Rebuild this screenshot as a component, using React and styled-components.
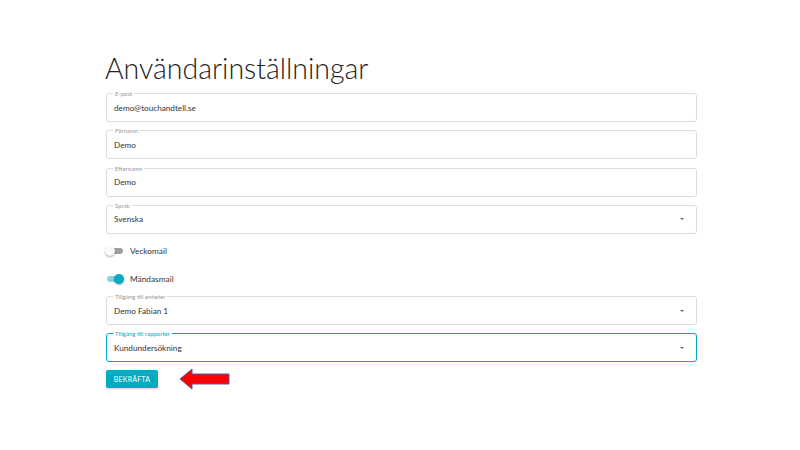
import React from "react";
import styled, { createGlobalStyle } from "styled-components";

const GlobalStyle = createGlobalStyle`
  body {
    margin: 0;
    background: #ffffff;
    font-family: Lato, "Liberation Sans", sans-serif;
    color: #333;
  }
`;

const accent = "#00acc1";

const Page = styled.div`
  width: 591px;
  margin-left: 106px;
  padding-top: 51px;
`;

const Title = styled.h1`
  margin: 0 0 5px -1px;
  font-weight: 300;
  font-size: 28.5px;
  line-height: 34px;
  color: #222;
`;

const Field = styled.fieldset`
  box-sizing: border-box;
  margin: 0 0 5.3px;
  padding: 0 7px;
  height: 32px;
  border: ${p => (p.$focused ? `1.5px solid ${accent}` : "1px solid #dcdcdc")};
  border-radius: 3px;
  display: flex;
  align-items: center;
  justify-content: space-between;
`;

const Legend = styled.legend`
  font-size: 6px;
  line-height: 7px;
  padding: 0 2px;
  margin-left: -1px;
  color: ${p => (p.$focused ? accent : "#999")};
`;

const Value = styled.span`
  font-size: 8.2px;
  font-weight: 400;
  color: #333;
  margin-top: -3px;
`;

const Caret = styled.span`
  width: 0;
  height: 0;
  border-left: 2.5px solid transparent;
  border-right: 2.5px solid transparent;
  border-top: 2.5px solid #666;
  margin-right: 5px;
  margin-top: -3px;
`;

const ToggleGroup = styled.div`
  margin-top: -2px;
`;

const ToggleRow = styled.label`
  display: flex;
  align-items: center;
  gap: 7px;
  height: 28px;
  font-size: 8.3px;
  color: #333;
`;

const Track = styled.span`
  position: relative;
  width: 16px;
  height: 6px;
  border-radius: 3px;
  margin-left: 1px;
  background: ${p => (p.$on ? "#7fd6e0" : "#9e9e9e")};
`;

const Thumb = styled.span`
  position: absolute;
  top: -2px;
  left: ${p => (p.$on ? "7px" : "-2px")};
  width: 10px;
  height: 10px;
  border-radius: 50%;
  background: ${p => (p.$on ? accent : "#fafafa")};
  box-shadow: 0 1px 2px rgba(0, 0, 0, 0.35);
`;

const Actions = styled.div`
  display: flex;
  align-items: center;
  gap: 21px;
  margin-top: 4px;
`;

const Button = styled.button`
  height: 18px;
  width: 52px;
  border: none;
  border-radius: 2px;
  background: ${accent};
  color: #fff;
  font-family: Lato, "Liberation Sans", sans-serif;
  font-size: 7px;
  letter-spacing: 0.2px;
  padding: 0;
  box-shadow: 0 1px 2px rgba(0, 0, 0, 0.2);
`;

const Input = ({ label, value, select, focused }) => (
  <Field $focused={focused}>
    <Legend $focused={focused}>{label}</Legend>
    <Value>{value}</Value>
    {select && <Caret />}
  </Field>
);

const Toggle = ({ on, label }) => (
  <ToggleRow>
    <Track $on={on}>
      <Thumb $on={on} />
    </Track>
    {label}
  </ToggleRow>
);

const Arrow = () => (
  <svg width="52" height="22" viewBox="0 0 52 22">
    <polygon
      points="1,11 13,1 13,6 50,6 50,16 13,16 13,21"
      fill="#ff0000"
      stroke="#4a5fa8"
      strokeWidth="1"
    />
  </svg>
);

export default function App() {
  return (
    <>
      <GlobalStyle />
      <Page>
        <Title>Användarinställningar</Title>
        <Input label="E-post" value="demo@touchandtell.se" />
        <Input label="Förnamn" value="Demo" />
        <Input label="Efternamn" value="Demo" />
        <Input label="Språk" value="Svenska" select />
        <ToggleGroup>
          <Toggle label="Veckomail" />
          <Toggle label="Mändasmail" on />
        </ToggleGroup>
        <Input label="Tillgång till enheter" value="Demo Fabian 1" select />
        <Input label="Tillgång till rapporter" value="Kundundersökning" select focused />
        <Actions>
          <Button>BEKRÄFTA</Button>
          <Arrow />
        </Actions>
      </Page>
    </>
  );
}
